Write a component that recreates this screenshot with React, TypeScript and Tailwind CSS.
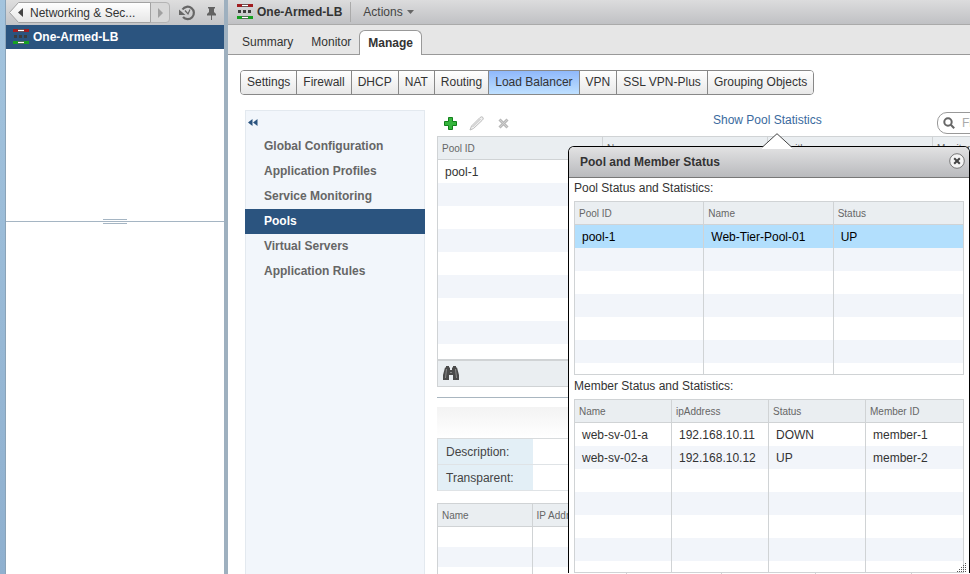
import { clsx } from "clsx";

const sections = ["Settings", "Firewall", "DHCP", "NAT", "Routing", "Load Balancer", "VPN", "SSL VPN-Plus", "Grouping Objects"];

const menu = [
  "Global Configuration",
  "Application Profiles",
  "Service Monitoring",
  "Pools",
  "Virtual Servers",
  "Application Rules",
];

function EdgeIcon() {
  return (
    <svg width="16" height="16" viewBox="0 0 16 16" shapeRendering="crispEdges" aria-hidden="true">
      <rect x="0" y="0" width="5" height="3" fill="#a01c20" />
      <rect x="11" y="0" width="5" height="3" fill="#a01c20" />
      <rect x="5" y="0" width="6" height="3" fill="#6a5555" />
      <rect x="5" y="1" width="6" height="1" fill="#fff" />
      <rect x="1" y="6" width="3" height="3" fill="#3c3c3c" />
      <rect x="6" y="6" width="3" height="3" fill="#3c3c3c" />
      <rect x="11" y="6" width="3" height="3" fill="#3c3c3c" />
      <rect x="0" y="12" width="5" height="3" fill="#17a022" />
      <rect x="11" y="12" width="5" height="3" fill="#17a022" />
      <rect x="5" y="12" width="6" height="3" fill="#55705a" />
      <rect x="5" y="13" width="6" height="1" fill="#fff" />
    </svg>
  );
}

type GridProps = {
  label: string;
  columns: string[];
  rows: string[][];
  total: number;
  selected?: number;
  lines?: boolean;
  rowClass?: string;
  lastClass?: string;
};

function Grid({ label, columns, rows, total, selected, lines = true, rowClass = "h-[23px]", lastClass = "h-[11px]" }: GridProps) {
  return (
    <table aria-label={label} className="w-full table-fixed border-separate border-spacing-0 border border-[#d0d3d5] bg-white text-left">
      <thead>
        <tr className="h-[23px] bg-[#eaeef1] text-[10px] text-[#666]">
          {columns.map((c, i) => (
            <th key={c} className={clsx("border-b border-[#d0d3d5] p-0 pt-0.5 pl-1 font-normal", i < columns.length - 1 && "border-r")}>
              {c}
            </th>
          ))}
        </tr>
      </thead>
      <tbody>
        {Array.from({ length: total }, (_, r) => (
          <tr
            key={r}
            className={clsx(
              r === total - 1 ? lastClass : rowClass,
              r === selected ? "bg-[#b2dffd] text-black" : r % 2 ? "bg-[#f2f5fa]" : "bg-white",
            )}
          >
            {columns.map((c, i) => (
              <td key={c} className={clsx("p-0 pl-[7px]", lines && i < columns.length - 1 && "border-r border-[#d0d3d5]")}>
                {rows[r]?.[i]}
              </td>
            ))}
          </tr>
        ))}
      </tbody>
    </table>
  );
}

function Navigator() {
  return (
    <aside className="flex w-[218px] shrink-0 flex-col bg-white">
      <div className="flex h-[25px] items-center bg-linear-to-b from-[#dedede] to-[#c3c4c7] pl-[3px]">
        <button className="relative flex h-[21px] w-[141px] items-center pl-[21px] text-[#333]">
          <svg className="absolute inset-0" width="142" height="21" viewBox="0 0 142 21" aria-hidden="true">
            <defs>
              <linearGradient id="crumb" x1="0" y1="0" x2="0" y2="1">
                <stop offset="0" stopColor="#fff" />
                <stop offset="1" stopColor="#e6e6e6" />
              </linearGradient>
            </defs>
            <path d="M9.500.5H141.500V20.500H9.500L.5 10.500Z" fill="url(#crumb)" stroke="#a2a2a2" />
            <path d="M14 6v9l-5-4.500z" fill="#444" />
          </svg>
          <span className="relative">Networking &amp; Sec...</span>
        </button>
        <button aria-label="Forward" className="flex h-[21px] w-5 items-center justify-center rounded-r-sm border border-[#b4b4b4] bg-[#d8d8d8]">
          <svg width="5" height="10" viewBox="0 0 5 10" aria-hidden="true">
            <path d="M0 0v10l5-5z" fill="#a0a0a0" />
          </svg>
        </button>
        <button aria-label="History" className="ml-2">
          <svg width="18" height="16" viewBox="0 0 18 16" fill="none" stroke="#666" aria-hidden="true">
            <path d="M4.500 4.500A6.200 6.200 0 1 1 5 12" strokeWidth="2.200" />
            <path d="M1 4.500V10H7.500Z" fill="#666" stroke="none" />
            <path d="m7 5.500 3 3.500 2-4.500" strokeWidth="1.200" />
          </svg>
        </button>
        <button aria-label="Pin" className="ml-2.5">
          <svg width="11" height="14" viewBox="0 0 11 14" fill="#626262" aria-hidden="true">
            <path d="M2 1h7v1.500H8V6l2 2v1.500H6V14H5V9.500H1V8l2-2V2.500H2z" />
          </svg>
        </button>
      </div>
      <a href="#edge" className="flex h-6 items-center gap-1 bg-[#2b547f] pl-[7px] font-bold text-white">
        <EdgeIcon />
        One-Armed-LB
      </a>
      <div className="h-[170px]" />
      <div className="flex flex-col items-center">
        <div className="h-px w-6 bg-[#a5b5c3]" />
        <div className="my-px h-px w-full bg-[#a5b5c3]" />
        <div className="h-px w-6 bg-[#a5b5c3]" />
      </div>
    </aside>
  );
}

function PoolStatus() {
  return (
    <div role="dialog" aria-labelledby="status-title" className="absolute top-9 right-0 left-[131px] rounded-t-md border border-b-0 border-black bg-white">
      <svg className="absolute -top-[14px] left-[193px]" width="30" height="16" viewBox="0 0 30 16" aria-hidden="true">
        <path d="M0 14.500 15 .5 30 14.500V16H0Z" fill="#fff" />
        <path d="M.5 14 15 .7 29.500 14" fill="none" stroke="#444" />
      </svg>
      <div className="flex h-[31px] items-center justify-between rounded-t-[5px] border-b border-[#777] bg-linear-to-b from-[#e2e2e3] to-[#b9babd] pr-1 pl-[11px]">
        <h2 id="status-title" className="font-bold">Pool and Member Status</h2>
        <button aria-label="Close" className="mb-0.5 size-4">
          <svg width="16" height="16" viewBox="0 0 16 16" aria-hidden="true">
            <circle cx="8" cy="8" r="7.300" fill="#f4f4f4" stroke="#777" />
            <path d="m5.200 5.200 5.600 5.600m0-5.600-5.600 5.600" stroke="#444" strokeWidth="2" />
          </svg>
        </button>
      </div>
      <div className="px-[5px]">
        <p className="h-[23px] leading-5">Pool Status and Statistics:</p>
        <Grid label="Pool Status and Statistics" columns={["Pool ID", "Name", "Status"]} rows={[["pool-1", "Web-Tier-Pool-01", "UP"]]} total={7} selected={0} />
        <p className="h-6 leading-[22px]">Member Status and Statistics:</p>
        <Grid
          label="Member Status and Statistics"
          columns={["Name", "ipAddress", "Status", "Member ID"]}
          rows={[
            ["web-sv-01-a", "192.168.10.11", "DOWN", "member-1"],
            ["web-sv-02-a", "192.168.10.12", "UP", "member-2"],
          ]}
          total={7}
        />
      </div>
      <svg className="absolute right-0.5 bottom-0" width="10" height="10" viewBox="0 0 10 10" fill="#555" shapeRendering="crispEdges" aria-hidden="true">
        {[0, 2, 4, 6, 8].map((y) =>
          [0, 2, 4, 6, 8].filter((x) => x + y >= 8).map((x) => <rect key={`${x}-${y}`} x={x} y={y} width="1" height="1" />),
        )}
      </svg>
    </div>
  );
}

function Pools() {
  return (
    <div className="relative h-[464px] min-w-0 flex-1">
      <div className="h-full overflow-hidden">
        <div className="flex h-[26px] w-[660px] items-center">
          <button aria-label="Add" className="ml-[7px]">
            <svg width="13" height="13" viewBox="0 0 13 13" aria-hidden="true">
              <path d="M4.500.5h4v4h4v4h-4v4h-4v-4h-4v-4h4z" fill="#35b53c" stroke="#12801b" strokeLinejoin="round" />
            </svg>
          </button>
          <button aria-label="Edit" disabled className="ml-3">
            <svg width="15" height="15" viewBox="0 0 15 15" fill="#f0f0f0" stroke="#bdbdbd" aria-hidden="true">
              <path d="m1 14 1.500-4L11 1.500Q13 0 14 1.500T13 4.500L4.500 12.500Z" />
              <path d="m3.500 11 8-8" />
            </svg>
          </button>
          <button aria-label="Delete" disabled className="ml-3.5">
            <svg width="11" height="11" viewBox="0 0 11 11" aria-hidden="true">
              <path d="m1.500 1.500 8 8m0-8-8 8" stroke="#b8b8b8" strokeWidth="3" />
              <path d="m2 2 7 7m0-7-7 7" stroke="#cfcfcf" strokeWidth="1" />
            </svg>
          </button>
          <a href="#statistics" className="mb-1.5 ml-[204px] text-[#3a6a9e]">Show Pool Statistics</a>
          <label className="ml-auto flex h-[22px] w-40 items-center rounded-[10px] border border-[#999] bg-white pl-[5px]">
            <svg width="12" height="12" viewBox="0 0 12 12" fill="none" stroke="#666" strokeWidth="2" aria-hidden="true">
              <circle cx="5" cy="5" r="3.700" />
              <path d="m7.800 7.800 3.400 3.400" />
            </svg>
            <input aria-label="Filter" placeholder="Filter" className="ml-[7px] w-24 placeholder:text-[#aaa]" />
          </label>
        </div>
        <div className="w-[662px]">
          <Grid label="Pools" columns={["Pool ID", "Name", "Algorithm", "Monitor Id"]} rows={[["pool-1"]]} total={9} lines={false} lastClass="h-[15px]" />
        </div>
        <div className="flex h-[27px] items-center border border-[#d0d3d5] bg-[#eaeef1] pl-[5px]">
          <button aria-label="Find">
            <svg width="16" height="15" viewBox="0 0 16 15" fill="#4a4a4a" aria-hidden="true">
              <path d="M2 1.500h1V0h3v1.500h1V4h2V1.500h1V0h3v1.500h1L16 9v5h-6V9H6v5H0V9z" />
              <path d="M3.500 3 2.500 12M12.500 3l1 9M7 6.500h2" stroke="#8a8a8a" />
            </svg>
          </button>
        </div>
        <div className="mt-2.5 h-px bg-[#a9b6c0]" />
        <div className="mt-[9px] h-[31px] bg-linear-to-b from-[#f3f3f3] to-white" />
        <table aria-label="Details" className="w-full table-fixed border-separate border-spacing-0 border border-b-0 border-[#d8dbdd] text-left">
          <tbody>
            {["Description:", "Transparent:"].map((t) => (
              <tr key={t} className="h-[26px]">
                <th className="w-[95px] border-b border-[#dfe3e6] bg-[#e3eff6] p-0 pl-2 font-normal text-[#444]">{t}</th>
                <td className="border-b border-[#dfe3e6] p-0" />
              </tr>
            ))}
          </tbody>
        </table>
        <div className="mt-3 w-[475px]">
          <Grid label="Members" columns={["Name", "IP Address", "Weight", "Port", "Monitor"]} rows={[]} total={4} rowClass="h-5" lastClass="h-5" />
        </div>
      </div>
      <PoolStatus />
    </div>
  );
}

export default function App() {
  return (
    <div className="flex h-screen overflow-hidden bg-[#9eb0bf] font-['Liberation_Sans',Arial,sans-serif] text-xs text-[#333]">
      <div className="w-1.5 shrink-0 border-r border-[#8aa3b8] bg-linear-to-b from-[#a3c4de] to-[#8fb0cf]" />
      <Navigator />
      <main className="ml-1 min-w-0 flex-1 overflow-hidden bg-white">
        <header className="flex h-[25px] items-center border-b border-[#aaa] bg-linear-to-b from-[#dcdcdd] to-[#c0c1c4] pl-[9px]">
          <EdgeIcon />
          <h1 className="ml-1 font-bold">One-Armed-LB</h1>
          <button className="ml-2 flex h-5 items-center gap-1 border-l border-[#aaa] pl-3 text-[#444]">
            Actions
            <svg width="7" height="4" viewBox="0 0 7 4" aria-hidden="true">
              <path d="M0 0h7L3.500 4z" fill="#666" />
            </svg>
          </button>
        </header>
        <nav className="flex h-[30px] items-end border-b border-[#999] bg-[#e6e6e6] pl-3.5">
          <a href="#summary" className="h-5">Summary</a>
          <a href="#monitor" className="ml-[18px] h-5">Monitor</a>
          <a href="#manage" className="-mb-px ml-2 flex h-[25px] items-center rounded-t-md border border-b-0 border-[#999] bg-white px-2 font-bold">
            Manage
          </a>
        </nav>
        <div className="mt-[15px] ml-3 inline-flex h-[25px] overflow-hidden rounded border border-[#888]">
          {sections.map((s) => (
            <button
              key={s}
              className={clsx(
                "border-[#888] px-1.5 pb-0.5 whitespace-nowrap not-last:border-r",
                s === "Load Balancer" ? "bg-linear-to-b from-[#8fb8fb] to-[#bfe0ff]" : "bg-linear-to-b from-white to-[#e8e8e8]",
              )}
            >
              {s}
            </button>
          ))}
        </div>
        <div className="mt-[15px] flex gap-3 pl-[17px]">
          <nav className="h-[464px] w-[180px] shrink-0 border border-b-0 border-[#e3e9ef] bg-[#f2f6fb]">
            <button aria-label="Collapse" className="flex h-[23px] w-full items-center pl-0.5">
              <svg width="10" height="7" viewBox="0 0 10 7" fill="#2b547f" aria-hidden="true">
                <path d="M4.500 0v7L0 3.500zM9.500 0v7L5 3.500z" />
              </svg>
            </button>
            {menu.map((m) => (
              <a
                key={m}
                href="#menu"
                className={clsx("-mx-px flex h-[25px] items-center pb-0.5 pl-[19px] font-bold", m === "Pools" ? "bg-[#2b547f] text-white" : "text-[#666]")}
              >
                {m}
              </a>
            ))}
          </nav>
          <Pools />
        </div>
      </main>
    </div>
  );
}
